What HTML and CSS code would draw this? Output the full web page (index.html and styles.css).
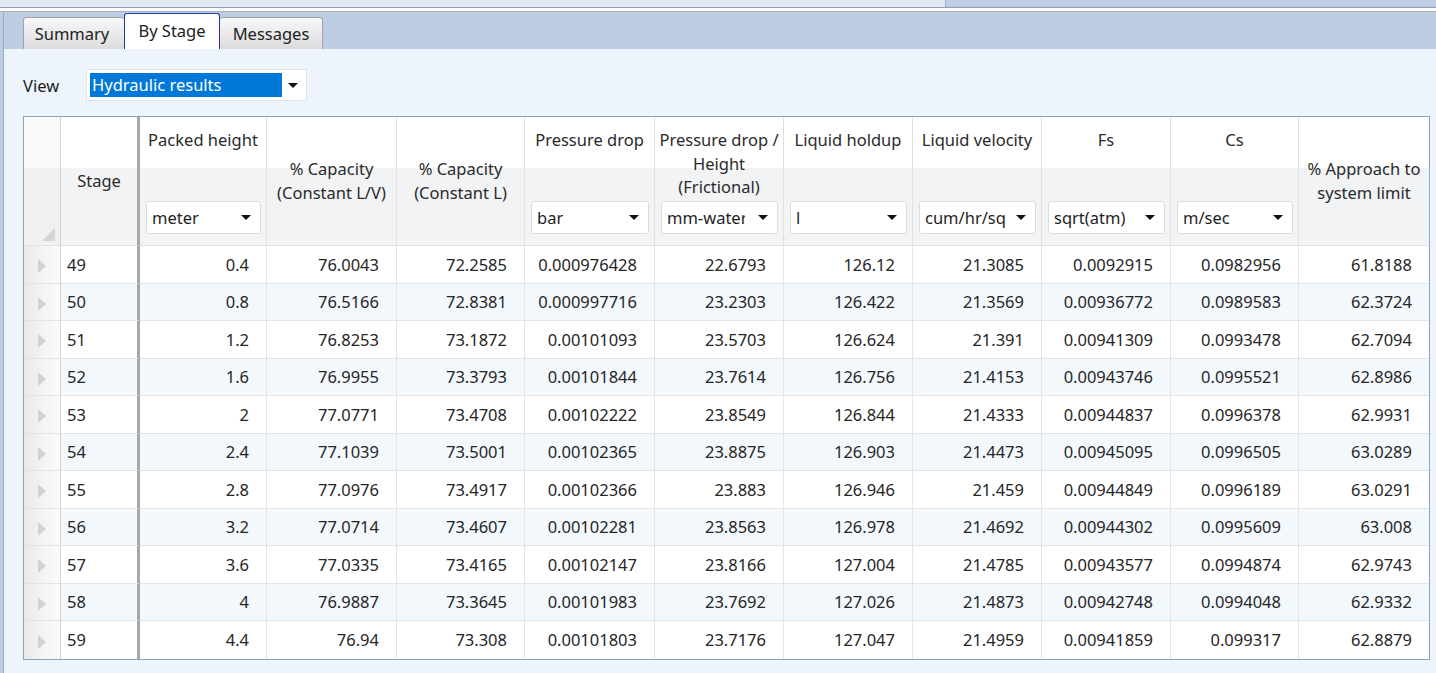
FILE: index.html
```html
<!DOCTYPE html>
<html>
<head>
<meta charset="utf-8">
<title>By Stage - Hydraulic results</title>
<link rel="stylesheet" href="styles.css">
</head>
<body>
<div class="top"><div class="top-left"></div><div class="top-right"></div></div>
<div class="gap"></div>
<div class="frame">
  <div class="tabs">
    <div class="tab tab-summary">Summary</div>
    <div class="tab tab-stage active">By Stage</div>
    <div class="tab tab-messages">Messages</div>
  </div>
  <div class="panel">
    <div class="viewrow">
      <span class="viewlabel">View</span>
      <div class="select">
        <span class="sel-text">Hydraulic results</span>
        <span class="sel-arrow"><span class="arr"></span></span>
      </div>
    </div>
    <table class="grid">
      <colgroup>
        <col class="c-rh"><col class="c-stage"><col class="c-127"><col class="c-130"><col class="c-128"><col class="c-130"><col class="c-129"><col class="c-129"><col class="c-129"><col class="c-129"><col class="c-128"><col class="c-130">
      </colgroup>
      <thead>
        <tr>
          <th class="rh"><div class="hc corner"><span class="corner-tri"></span></div></th>
          <th class="stage"><div class="hc center">Stage</div></th>
          <th><div class="hc units"><span class="ttl">Packed height</span><div class="combo"><span class="ctext">meter</span><span class="arr"></span></div></div></th>
          <th><div class="hc center">% Capacity<br>(Constant L/V)</div></th>
          <th><div class="hc center">% Capacity<br>(Constant L)</div></th>
          <th><div class="hc units"><span class="ttl">Pressure drop</span><div class="combo"><span class="ctext">bar</span><span class="arr"></span></div></div></th>
          <th><div class="hc units"><span class="ttl">Pressure drop /<br>Height<br>(Frictional)</span><div class="combo"><span class="ctext clip">mm-water</span><span class="arr"></span></div></div></th>
          <th><div class="hc units"><span class="ttl">Liquid holdup</span><div class="combo"><span class="ctext">l</span><span class="arr"></span></div></div></th>
          <th><div class="hc units"><span class="ttl">Liquid velocity</span><div class="combo"><span class="ctext">cum/hr/sq</span><span class="arr"></span></div></div></th>
          <th><div class="hc units"><span class="ttl">Fs</span><div class="combo"><span class="ctext">sqrt(atm)</span><span class="arr"></span></div></div></th>
          <th><div class="hc units"><span class="ttl">Cs</span><div class="combo"><span class="ctext">m/sec</span><span class="arr"></span></div></div></th>
          <th class="last"><div class="hc center">% Approach to<br>system limit</div></th>
        </tr>
      </thead>
      <tbody>
        <tr><td class="rh"><span class="rtri"></span></td><td class="stage">49</td><td>0.4</td><td>76.0043</td><td>72.2585</td><td>0.000976428</td><td>22.6793</td><td>126.12</td><td>21.3085</td><td>0.0092915</td><td>0.0982956</td><td class="last">61.8188</td></tr>
        <tr class="alt"><td class="rh"><span class="rtri"></span></td><td class="stage">50</td><td>0.8</td><td>76.5166</td><td>72.8381</td><td>0.000997716</td><td>23.2303</td><td>126.422</td><td>21.3569</td><td>0.00936772</td><td>0.0989583</td><td class="last">62.3724</td></tr>
        <tr><td class="rh"><span class="rtri"></span></td><td class="stage">51</td><td>1.2</td><td>76.8253</td><td>73.1872</td><td>0.00101093</td><td>23.5703</td><td>126.624</td><td>21.391</td><td>0.00941309</td><td>0.0993478</td><td class="last">62.7094</td></tr>
        <tr class="alt"><td class="rh"><span class="rtri"></span></td><td class="stage">52</td><td>1.6</td><td>76.9955</td><td>73.3793</td><td>0.00101844</td><td>23.7614</td><td>126.756</td><td>21.4153</td><td>0.00943746</td><td>0.0995521</td><td class="last">62.8986</td></tr>
        <tr><td class="rh"><span class="rtri"></span></td><td class="stage">53</td><td>2</td><td>77.0771</td><td>73.4708</td><td>0.00102222</td><td>23.8549</td><td>126.844</td><td>21.4333</td><td>0.00944837</td><td>0.0996378</td><td class="last">62.9931</td></tr>
        <tr class="alt"><td class="rh"><span class="rtri"></span></td><td class="stage">54</td><td>2.4</td><td>77.1039</td><td>73.5001</td><td>0.00102365</td><td>23.8875</td><td>126.903</td><td>21.4473</td><td>0.00945095</td><td>0.0996505</td><td class="last">63.0289</td></tr>
        <tr><td class="rh"><span class="rtri"></span></td><td class="stage">55</td><td>2.8</td><td>77.0976</td><td>73.4917</td><td>0.00102366</td><td>23.883</td><td>126.946</td><td>21.459</td><td>0.00944849</td><td>0.0996189</td><td class="last">63.0291</td></tr>
        <tr class="alt"><td class="rh"><span class="rtri"></span></td><td class="stage">56</td><td>3.2</td><td>77.0714</td><td>73.4607</td><td>0.00102281</td><td>23.8563</td><td>126.978</td><td>21.4692</td><td>0.00944302</td><td>0.0995609</td><td class="last">63.008</td></tr>
        <tr><td class="rh"><span class="rtri"></span></td><td class="stage">57</td><td>3.6</td><td>77.0335</td><td>73.4165</td><td>0.00102147</td><td>23.8166</td><td>127.004</td><td>21.4785</td><td>0.00943577</td><td>0.0994874</td><td class="last">62.9743</td></tr>
        <tr class="alt"><td class="rh"><span class="rtri"></span></td><td class="stage">58</td><td>4</td><td>76.9887</td><td>73.3645</td><td>0.00101983</td><td>23.7692</td><td>127.026</td><td>21.4873</td><td>0.00942748</td><td>0.0994048</td><td class="last">62.9332</td></tr>
        <tr class="lastrow"><td class="rh"><span class="rtri"></span></td><td class="stage">59</td><td>4.4</td><td>76.94</td><td>73.308</td><td>0.00101803</td><td>23.7176</td><td>127.047</td><td>21.4959</td><td>0.00941859</td><td>0.099317</td><td class="last">62.8879</td></tr>
      </tbody>
    </table>
  </div>
</div>
</body>
</html>
```
FILE: styles.css
```css
* { box-sizing: border-box; }
html, body { margin: 0; padding: 0; }
body {
  width: 1436px;
  height: 673px;
  overflow: hidden;
  background: #bccde4;
  font-family: "Noto Sans", "Open Sans", sans-serif;
  font-size: 16.5px;
  color: #222;
}

/* top chrome */
.top { height: 8px; display: flex; border-bottom: 1px solid #8e9fb5; }
.top-left { width: 946px; background: #e2e8f1; border-right: 1px solid #9fb0c6; }
.top-right { flex: 1; background: #bccde4; }
.gap { height: 4px; background: #fbfbfb; border-bottom: 1px solid #a7b2c0; }

.frame {
  margin-left: 3px;
  border-left: 1px solid #97a8bf;
  height: 661px;
  display: flex;
  flex-direction: column;
}

/* tabs */
.tabs {
  height: 37px;
  display: flex;
  align-items: flex-end;
  padding-left: 19px;
  background: #bccde4;
}
.tab {
  height: 32px;
  border: 1px solid #a4a4a4;
  border-bottom: none;
  border-radius: 3px 3px 0 0;
  background: linear-gradient(#f8f8f8, #dcdcdc);
  display: flex;
  align-items: center;
  justify-content: center;
  color: #222;
  padding-bottom: 1px;
}
.tab-summary { width: 101px; border-right: none; padding-right: 4px; }
.tab-stage { width: 96px; }
.tab-messages { width: 103px; border-left: none; }
.tab.active {
  height: 36px;
  background: #fff;
  border-color: #2236a6;
  padding-bottom: 2px;
}

/* content panel */
.panel {
  flex: 1;
  background: #eef4fc;
  padding: 20px 0 0 19px;
}
.viewrow { display: flex; align-items: center; height: 32px; }
.viewlabel { width: 63px; color: #1c1c1c; }
.select {
  width: 221px;
  height: 32px;
  background: #fff;
  border: 1px solid #e0e4e9;
  padding: 3px;
  display: flex;
  align-items: center;
}
.sel-text {
  width: 192px;
  height: 24px;
  line-height: 24px;
  background: #0078d7;
  color: #fff;
  padding-left: 2px;
  white-space: nowrap;
}
.sel-arrow { flex: 1; display: flex; justify-content: center; }

.arr {
  display: inline-block;
  width: 0;
  height: 0;
  border-left: 5px solid transparent;
  border-right: 5px solid transparent;
  border-top: 5px solid #111;
}

/* grid */
.grid {
  margin-top: 15px;
  width: 1407px;
  table-layout: fixed;
  border-collapse: separate;
  border-spacing: 0;
  border: 1px solid #8ea3c1;
  background: #fff;
}
.c-rh { width: 37px; }
.c-stage { width: 79px; }
.c-127 { width: 127px; }
.c-128 { width: 128px; }
.c-129 { width: 129px; }
.c-130 { width: 130px; }

.grid th, .grid td {
  padding: 0;
  border-right: 1px solid #e4e4e4;
  border-bottom: 1px solid #e4e4e4;
  white-space: nowrap;
}
.grid th {
  font-weight: normal;
  color: #2a2a2a;
  background: linear-gradient(#ffffff 0, #ffffff 51px, #f2f3f5 51px);
  border-right-color: #e0e0e0;
  border-bottom-color: #e2e2e2;
  vertical-align: top;
}
.grid .last { border-right: none; }
.grid .stage { border-right: 3px solid #a7a7a7; }
.grid .rh { border-right: 1px solid #d5d5d5; }

.hc {
  height: 128px;
  display: flex;
  flex-direction: column;
  line-height: 23.5px;
  text-align: center;
}
.hc.center { justify-content: center; align-items: center; padding-bottom: 1px; }
.hc.units { justify-content: space-between; padding: 0 0 11px 0; }
.hc.units .ttl { margin-top: 11px; display: block; }
.hc.corner {
  flex-direction: row;
  align-items: flex-end;
  justify-content: flex-end;
  padding: 0 5px 4px 0;
}
.grid th.rh { background: linear-gradient(#fafafa 0, #fafafa 51px, #f0f0f1 51px); }
.corner-tri {
  width: 0;
  height: 0;
  border-left: 13px solid transparent;
  border-bottom: 13px solid #d5d5d5;
}

.combo {
  height: 33px;
  margin: 0 5px 0 6px;
  background: #fff;
  border: 1px solid #dcdcdc;
  border-radius: 3px;
  display: flex;
  align-items: center;
  justify-content: space-between;
  padding: 0 9px 0 5px;
  color: #1e1e1e;
}
.ctext { display: block; overflow: hidden; text-align: left; }
.ctext.clip { width: 78px; }

.grid tbody tr { height: 37.5px; }
.grid td {
  text-align: right;
  padding-right: 17px;
  color: #262626;
  background: #fff;
  vertical-align: middle;
}
.grid tr.alt td { background: #f3f8fd; }
.grid tr.lastrow td { border-bottom: none; }
.grid td.stage { text-align: left; padding: 0 0 0 6px; }
.grid td.rh,
.grid tr.alt td.rh {
  text-align: left;
  padding: 0 0 0 14px;
  background: linear-gradient(to right, #e9e9e9, #f7f7f7 70%, #fbfbfb);
}
.rtri {
  display: inline-block;
  width: 0;
  height: 0;
  border-top: 7px solid transparent;
  border-bottom: 7px solid transparent;
  border-left: 8px solid #d2d2d2;
  vertical-align: middle;
}
```
